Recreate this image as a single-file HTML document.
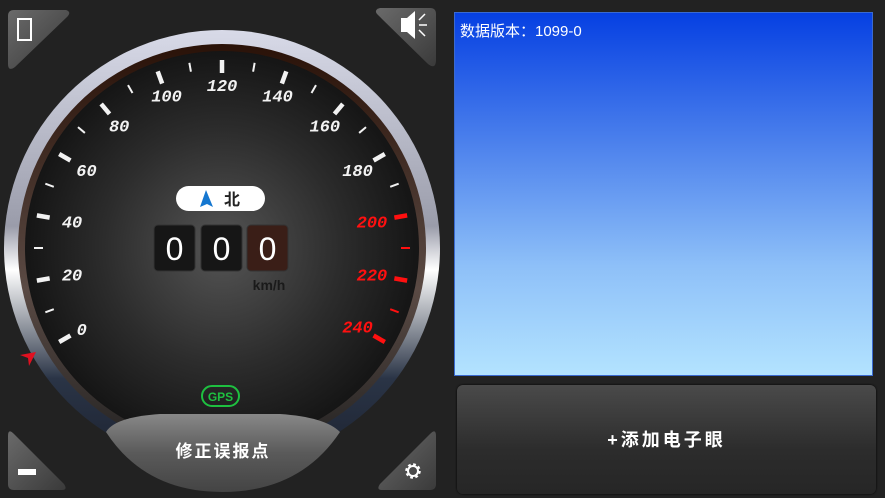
<!DOCTYPE html><html><head><meta charset="utf-8"><style>
body{margin:0;width:885px;height:498px;background:#222;overflow:hidden;font-family:"Liberation Sans","Noto Sans CJK SC",sans-serif}
#blue{position:absolute;left:454px;top:12px;width:419px;height:364px;background:linear-gradient(#0640e2,#4a7fec 35%,#8ec0f8 70%,#b3e3ff);border:1px solid #3a6ad0;box-sizing:border-box}
#blue span{position:absolute;left:5px;top:7px;color:#fff;font-size:15px}
#btn{position:absolute;left:457px;top:385px;width:419px;height:109px;background:linear-gradient(#4a4a4a,#2c2c2c 60%,#262626);border-radius:6px;box-shadow:0 0 2px #000;color:#fff;font-size:18px;font-weight:bold;letter-spacing:3px;text-align:center;line-height:110px}
</style></head><body>
<svg width="445" height="498" style="position:absolute;left:0;top:0">
<defs>
<radialGradient id="face" cx="0.5" cy="0.5" r="0.5"><stop offset="0" stop-color="#555"/><stop offset="0.6" stop-color="#2c2c2c"/><stop offset="1" stop-color="#151515"/></radialGradient>
<linearGradient id="ring" x1="0" y1="0" x2="0" y2="1"><stop offset="0" stop-color="#d8dae8"/><stop offset="0.45" stop-color="#9a9caa"/><stop offset="0.55" stop-color="#fff"/><stop offset="0.8" stop-color="#2a3446"/><stop offset="1" stop-color="#1c2230"/></linearGradient>
<linearGradient id="inner" x1="0" y1="0" x2="0" y2="1"><stop offset="0" stop-color="#2a1208"/><stop offset="0.6" stop-color="#5a4a44"/><stop offset="1" stop-color="#222"/></linearGradient>
<linearGradient id="corner" x1="0" y1="0" x2="1" y2="1"><stop offset="0" stop-color="#6a6a6a"/><stop offset="1" stop-color="#3a3a3a"/></linearGradient>
<linearGradient id="bb" x1="0" y1="0" x2="0" y2="1"><stop offset="0" stop-color="#888"/><stop offset="0.5" stop-color="#5a5a5a"/><stop offset="1" stop-color="#444"/></linearGradient>
</defs>
<circle cx="222" cy="248" r="218" fill="url(#ring)"/>
<circle cx="222" cy="248" r="204" fill="url(#inner)"/>
<circle cx="222" cy="248" r="197" fill="url(#face)"/>
<g id="ticks"></g>
<rect x="176" y="186" width="89" height="25" rx="12.5" fill="#fff"/>
<path d="M206 190 L213 207 L207 204 L200 207 Z" fill="#1577d0"/>
<text x="232" y="205" font-size="16" font-weight="bold" fill="#222" text-anchor="middle" font-family="Noto Sans CJK SC">北</text>
<rect x="154" y="225" width="41" height="46" rx="4" fill="#161616" stroke="#333"/>
<rect x="201" y="225" width="41" height="46" rx="4" fill="#161616" stroke="#333"/>
<rect x="247" y="225" width="41" height="46" rx="4" fill="#3a1e17" stroke="#333"/>
<g fill="#fff" font-size="32" text-anchor="middle"><text x="174.5" y="260">0</text><text x="221.5" y="260">0</text><text x="267.5" y="260">0</text></g>
<text x="269" y="290" font-size="14" font-weight="bold" fill="#1a1a1a" text-anchor="middle">km/h</text>
<rect x="202" y="386" width="37" height="20" rx="10" fill="none" stroke="#1ec040" stroke-width="2"/>
<text x="220.5" y="401" font-size="12" font-weight="bold" fill="#1ec040" text-anchor="middle">GPS</text>
<path d="M20 355 L36 352 L29 366 L28 358 Z" fill="#e01020"/>
<path d="M106 432 Q115 417 160 414 L280 414 Q325 417 340 432 Q300 492 222 492 Q145 492 106 432 Z" fill="url(#bb)"/>
<text x="223" y="457" font-size="17" font-weight="bold" fill="#fff" text-anchor="middle" letter-spacing="2">修正误报点</text>
<path d="M14 10 L66 10 Q72 12 67 17 L15 67 Q8 72 8 64 L8 16 Q8 10 14 10Z" fill="url(#corner)"/>
<rect x="18" y="19" width="13" height="21" fill="none" stroke="#fff" stroke-width="2"/>
<path d="M430 8 L380 8 Q373 10 378 15 L428 64 Q436 70 436 60 L436 14 Q436 8 430 8Z" fill="url(#corner)"/>
<path d="M401 18 L407 18 L415 11 L415 39 L407 32 L401 32Z" fill="#fff"/>
<path d="M419 20 L425 14 M419 25 L427 25 M419 30 L425 36" stroke="#fff" stroke-width="1.5"/>
<path d="M8 436 Q8 428 14 434 L64 484 Q68 490 62 490 L14 490 Q8 490 8 484Z" fill="url(#corner)"/>
<rect x="18" y="469" width="18" height="6" fill="#fff"/>
<path d="M436 436 Q436 428 430 434 L380 484 Q376 490 382 490 L430 490 Q436 490 436 484Z" fill="url(#corner)"/>
<circle cx="413" cy="471" r="6" fill="none" stroke="#fff" stroke-width="3.5" stroke-dasharray="2.5 2.2"/>
<circle cx="413" cy="471" r="5" fill="none" stroke="#fff" stroke-width="2"/>
</svg>
<div id="blue"><span>数据版本：1099-0</span></div>
<div id="btn">+添加电子眼</div>
<script>
var g=document.getElementById('ticks'),s='',cx=222,cy=248;
for(var v=0;v<=240;v+=10){var a=(v-120)*Math.PI/180,sn=Math.sin(a),cs=-Math.cos(a);
var maj=v%20==0,col=v>=200?'#ff1010':'#f2f2f2';var r1=maj?175:179,r2=188;
s+='<line x1="'+(cx+sn*r1)+'" y1="'+(cy+cs*r1)+'" x2="'+(cx+sn*r2)+'" y2="'+(cy+cs*r2)+'" stroke="'+col+'" stroke-width="'+(maj?4.5:2)+'"/>';
if(maj){var rl=(v==0?162:150+13*Math.abs(cs));s+='<text x="'+(cx+sn*rl)+'" y="'+(cy+cs*rl+6)+'" fill="'+col+'" font-size="17" font-style="italic" font-weight="bold" text-anchor="middle" font-family="Liberation Mono">'+v+'</text>';}}
g.innerHTML=s;
</script>
</body></html>
